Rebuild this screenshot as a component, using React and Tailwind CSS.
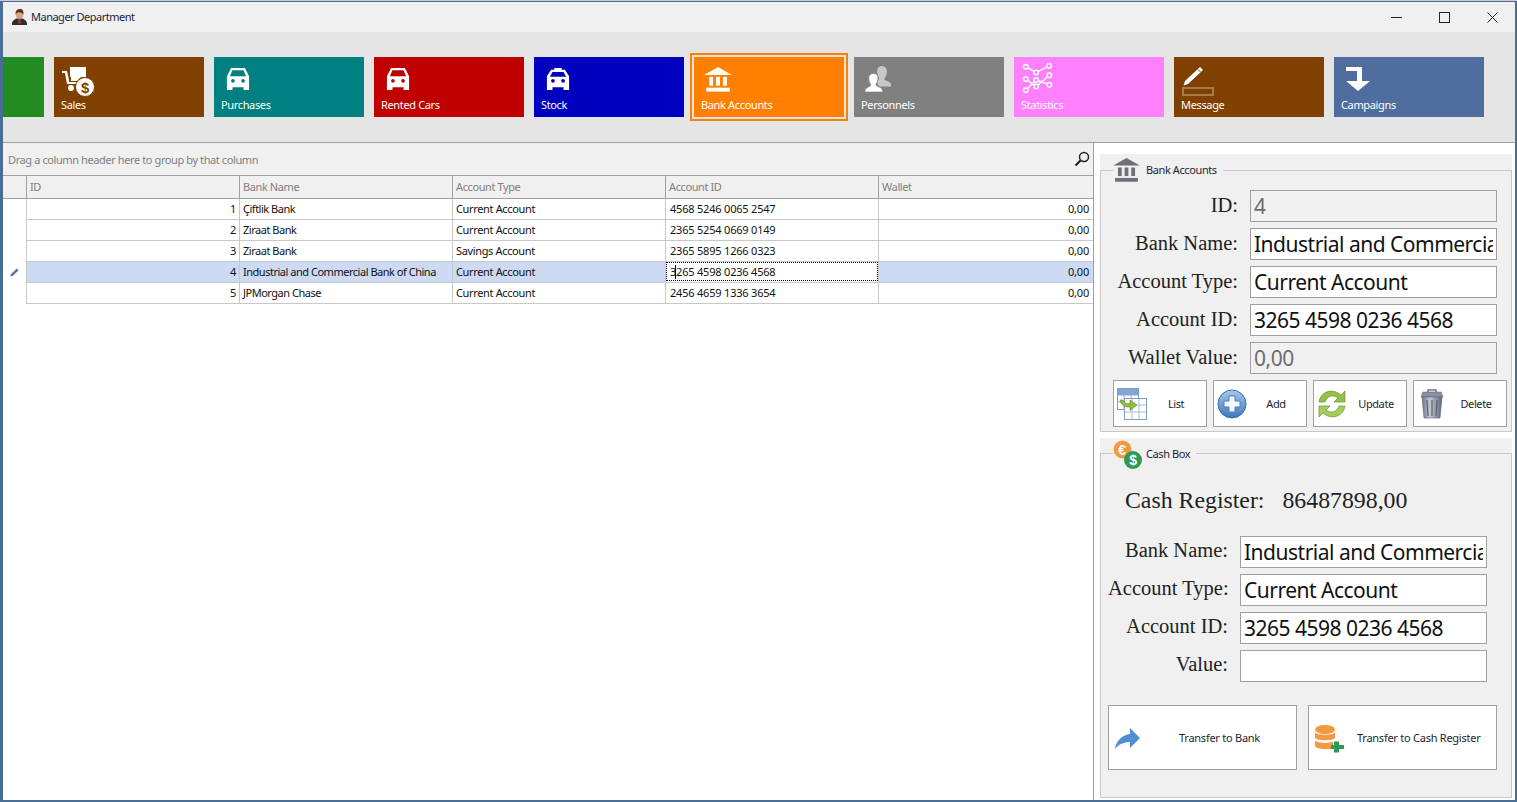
const uiFont = "font-['Noto_Sans','Open_Sans',sans-serif]"

const CarIcon = ({ color }) => (
  <svg width="24" height="24" viewBox="0 0 26 26">
    <path d="M5.500 1H20.500L25 10V25H19V22H7V25H1V10Z" fill="#fff" />
    <path d="M7 3.500H19L21.800 10H4.200Z" fill={color} />
    <circle cx="7.500" cy="15" r="2" fill={color} />
    <circle cx="18.500" cy="15" r="2" fill={color} />
  </svg>
)

const TaxiIcon = () => (
  <svg width="24" height="24" viewBox="0 0 26 26">
    <path d="M9 1H17V3H20.500L25 10V25H19V22H7V25H1V10L5.500 3H9Z" fill="#fff" />
    <path d="M7 5.500H19L21.800 10.500H4.200Z" fill="#0000bf" />
    <circle cx="7.500" cy="15" r="2" fill="#0000bf" />
    <circle cx="18.500" cy="15" r="2" fill="#0000bf" />
  </svg>
)

const BankIcon = ({ color = "#fff", width = 28 }) => (
  <svg width={width} height={width * 0.88} viewBox="0 0 28 25">
    <path d="M14 0L28 8H0Z" fill={color} />
    <rect x="5" y="10" width="4" height="9" fill={color} />
    <rect x="12" y="10" width="4" height="9" fill={color} />
    <rect x="19" y="10" width="4" height="9" fill={color} />
    <rect x="2" y="21" width="24" height="4" fill={color} />
  </svg>
)

const SalesIcon = () => (
  <svg width="33" height="31" viewBox="0 0 33 31">
    <path d="M8 1H24V11H19L15 15H9V11H8Z" fill="#fff" />
    <path d="M0 5H5L7 14V16H15V18H5L3 7H0Z" fill="#fff" />
    <circle cx="9" cy="22" r="3" fill="#fff" />
    <circle cx="23" cy="21" r="9.500" fill="#fff" stroke="#804000" strokeWidth="1" />
    <text x="23" y="26.500" textAnchor="middle" fontSize="15" fontWeight="700" fill="#804000" fontFamily="Liberation Sans, sans-serif">$</text>
  </svg>
)

const PeopleIcon = () => (
  <svg width="28" height="28" viewBox="0 0 30 30">
    <path d="M19 1C23 1 25 4 24.500 8C24.200 11 23 13 22 14V16C24 17 28 18 29 20V23H16L14 18L16 15V13C15 11 14 9 14 7C14 3 16 1 19 1Z" fill="#c8c8c8" />
    <path d="M10 9C14 9 15.500 12 15 15C14.700 17 14 19 13 20.500V22C16 24 19 24 20 27V29H1V27C2 24 5 24 7 22V20.500C6 19 5 17 5 14.500C5 11 7 9 10 9Z" fill="#fff" stroke="#808080" strokeWidth="0.800" />
  </svg>
)

const StatsIcon = () => (
  <svg width="32" height="32" viewBox="0 0 34 34" fill="none" stroke="#fff" strokeWidth="1.600">
    <path d="M4 4L15 10L29 3" />
    <path d="M4 17L15 25L29 13" />
    <path d="M4 29L15 18L29 23" />
    {[[4, 4], [15, 10], [29, 3], [4, 17], [15, 18], [29, 13], [15, 25], [29, 23], [4, 29]].map(([cx, cy]) => (
      <circle key={`${cx}-${cy}`} cx={cx} cy={cy} r="2.400" fill="#ff80ff" strokeWidth="1.600" />
    ))}
  </svg>
)

const MessageIcon = () => (
  <svg width="33" height="29" viewBox="0 0 33 29">
    <path d="M18 0L21 3L6 17L1.500 18.500L3 14Z" fill="#fff" />
    <path d="M16 2.500L18.500 5" stroke="#804000" strokeWidth="1" />
    <rect x="1" y="21" width="30" height="7" fill="none" stroke="#a67a4d" strokeWidth="2" />
  </svg>
)

const CampaignIcon = () => (
  <svg width="24" height="24" viewBox="0 0 24 24">
    <path d="M0 0H16V14H24L12 24L0 14H11V4H0Z" fill="#fff" />
  </svg>
)

const ListIcon = () => (
  <svg width="30" height="32" viewBox="0 0 30 32">
    <rect x="0.500" y="0.500" width="21" height="21" fill="#fff" stroke="#7f9cc4" />
    <rect x="1" y="1" width="20" height="6" fill="#7ea6d6" />
    <path d="M7 1V21M14 1V21M1 7H21M1 14H21" stroke="#8fa8cc" strokeWidth="1" />
    <rect x="7.500" y="10.500" width="22" height="21" fill="#fff" stroke="#7f9cc4" />
    <path d="M15 11V31M22 11V31M8 17H29M8 24H29" stroke="#a9bbd8" strokeWidth="1" />
    <path d="M3 12H6C7 15 10 16 13 15.500V12L20 17L13 22.500V19C8 19.500 4 17 3 12Z" fill="#8fbe3c" stroke="#5e8c1e" strokeWidth="0.600" />
  </svg>
)

const AddIcon = () => (
  <svg width="30" height="30" viewBox="0 0 30 30">
    <defs>
      <linearGradient id="addBlue" x1="0" y1="0" x2="0" y2="1">
        <stop offset="0" stopColor="#a5c8ee" />
        <stop offset="1" stopColor="#3c78c0" />
      </linearGradient>
    </defs>
    <circle cx="15" cy="15" r="14" fill="url(#addBlue)" stroke="#3a6ea8" strokeWidth="1" />
    <path d="M12 7H18V12H23V18H18V23H12V18H7V12H12Z" fill="#f4f8fd" stroke="#4f7fb5" strokeWidth="1" />
  </svg>
)

const UpdateIcon = () => (
  <svg width="30" height="30" viewBox="0 0 30 30">
    <path d="M2 13C3 5 11 0 19 3C21 4 23 5 24 6L28 2V13H17L21 9C16 5 10 7 8 13Z" fill="#94c04a" stroke="#6b962c" strokeWidth="0.700" />
    <path d="M28 17C27 25 19 30 11 27C9 26 7 25 6 24L2 28V17H13L9 21C14 25 20 23 22 17Z" fill="#a4cc5c" stroke="#6b962c" strokeWidth="0.700" />
  </svg>
)

const TrashIcon = () => (
  <svg width="24" height="30" viewBox="0 0 24 30">
    <defs>
      <linearGradient id="trashGrey" x1="0" y1="0" x2="1" y2="0">
        <stop offset="0" stopColor="#6c7488" />
        <stop offset="0.400" stopColor="#c4c8d2" />
        <stop offset="1" stopColor="#5c6478" />
      </linearGradient>
    </defs>
    <path d="M8 3V1H16V3" fill="none" stroke="#6c7488" strokeWidth="1.500" />
    <path d="M1 8L3 3H21L23 8Z" fill="#8a90a0" stroke="#5c6478" strokeWidth="0.600" />
    <path d="M2 8H22L20 29H4Z" fill="url(#trashGrey)" stroke="#5c6478" strokeWidth="0.600" />
    <path d="M7 11L8 27M12 11V27M17 11L16 27" stroke="#5c6478" strokeWidth="1.200" />
  </svg>
)

const CashIcon = () => (
  <svg width="29" height="29" viewBox="0 0 29 29">
    <circle cx="9.500" cy="9.500" r="9" fill="#f19a3e" />
    <text x="9" y="14.500" textAnchor="middle" fontSize="14" fontWeight="700" fill="#fff" fontFamily="Liberation Sans, sans-serif">€</text>
    <circle cx="20" cy="20" r="9" fill="#2f9a57" />
    <text x="20" y="25" textAnchor="middle" fontSize="14" fontWeight="700" fill="#fff" fontFamily="Liberation Sans, sans-serif">$</text>
  </svg>
)

const ShareIcon = () => (
  <svg width="25" height="22" viewBox="0 0 25 22">
    <path d="M15 0L25 10L15 20V14C9 14 4 16 0 21C1 13 7 7 15 6Z" fill="#4f8fd0" />
  </svg>
)

const DbAddIcon = () => (
  <svg width="30" height="28" viewBox="0 0 30 28">
    <ellipse cx="10" cy="4.500" rx="10" ry="4.500" fill="#f19a3e" />
    <path d="M0 7.500C2 10.500 18 10.500 20 7.500V13C18 16 2 16 0 13Z" fill="#f19a3e" />
    <path d="M0 15.500C2 18.500 16 18.500 18 16.500V20H16V24H10C5 24 1 23 0 21Z" fill="#f19a3e" />
    <path d="M19 17H24V20.500H29V24.500H24V28H19V24.500H16V20.500H19Z" fill="#2f9a57" transform="translate(0 -0.500)" />
  </svg>
)

const AvatarIcon = () => (
  <svg width="15" height="16" viewBox="0 0 16 17">
    <path d="M0 16C0 12 3 11 5 10H11C13 11 16 12 16 16V17H0Z" fill="#2b3038" />
    <path d="M7 10H9L9.500 15L8 16L6.500 15Z" fill="#b5332e" />
    <circle cx="8" cy="6" r="4" fill="#d8a583" />
    <path d="M4 6C3 2 6 0 8.500 0C11 0 13 2 12 6C11 4 9 3.500 7 3.500C5.500 3.500 4.500 5 4 6Z" fill="#5a2e1c" />
  </svg>
)

const PencilIcon = () => (
  <svg width="9" height="9" viewBox="0 0 10 10">
    <path d="M7.500 0.500L9.500 2.500L3 9L0.500 9.500L1 7Z" fill="#6272a4" />
  </svg>
)

const tiles = [
  { label: "Sales", bg: "bg-[#804000]", icon: <SalesIcon />, iconBox: "pl-[8px] pt-[9px]" },
  { label: "Purchases", bg: "bg-[#008080]", icon: <CarIcon color="#008080" />, iconBox: "pl-[12px] pt-[10px]" },
  { label: "Rented Cars", bg: "bg-[#c00000]", icon: <CarIcon color="#c00000" />, iconBox: "pl-[12px] pt-[10px]" },
  { label: "Stock", bg: "bg-[#0000bf]", icon: <TaxiIcon />, iconBox: "pl-[12px] pt-[10px]" },
  { label: "Bank Accounts", bg: "bg-[#ff8000]", icon: <BankIcon />, iconBox: "pl-[10px] pt-[10px]", selected: true },
  { label: "Personnels", bg: "bg-[#808080]", icon: <PeopleIcon />, iconBox: "pl-[10px] pt-[8px]" },
  { label: "Statistics", bg: "bg-[#ff80ff]", icon: <StatsIcon />, iconBox: "pl-[8px] pt-[6px]" },
  { label: "Message", bg: "bg-[#804000]", icon: <MessageIcon />, iconBox: "pl-[8px] pt-[10px]" },
  { label: "Campaigns", bg: "bg-[#4f6d9e]", icon: <CampaignIcon />, iconBox: "pl-[12px] pt-[10px]" },
]

const rows = [
  { id: 1, bank: "Çiftlik Bank", type: "Current Account", account: "4568 5246 0065 2547" },
  { id: 2, bank: "Ziraat Bank", type: "Current Account", account: "2365 5254 0669 0149" },
  { id: 3, bank: "Ziraat Bank", type: "Savings Account", account: "2365 5895 1266 0323" },
  { id: 4, bank: "Industrial and Commercial Bank of China", type: "Current Account", account: "3265 4598 0236 4568", active: true },
  { id: 5, bank: "JPMorgan Chase", type: "Current Account", account: "2456 4659 1336 3654" },
]

const gridCols = "grid grid-cols-[23px_213px_213px_213px_213px_215px]"

const Tile = ({ tile }) => (
  <div className={`relative w-[150px] h-[60px] shrink-0 ${tile.bg}`}>
    {tile.selected && (
      <div className="absolute -inset-1 border-2 border-[#ff8000] pointer-events-none">
        <div className="w-full h-full border-2 border-[#e5e5e5]" />
      </div>
    )}
    <div className={`h-[40px] ${tile.iconBox}`}>{tile.icon}</div>
    <div className="pl-[7px] text-[11px] leading-[16px] tracking-[-0.35px] text-white">{tile.label}</div>
  </div>
)

const Field = ({ label, value, disabled, labelW, labelY }) => (
  <div className="flex items-center h-[32px]">
    <label className={`${labelW} ${labelY} pr-[12px] text-right text-[20.5px] leading-[24px] tracking-normal text-[#222] font-['Liberation_Serif',serif] whitespace-nowrap`}>{label}</label>
    <input
      readOnly
      value={value}
      className={`w-[247px] h-[32px] border border-[#a0a0a0] px-[3px] text-[21px] tracking-[-0.5px] outline-none ${uiFont} ${disabled ? "bg-[#f0f0f0] text-[#6d6d6d]" : "bg-white text-[#111]"}`}
    />
  </div>
)

const ActionButton = ({ icon, label }) => (
  <button className="flex items-center w-[94px] h-[47px] bg-white border border-[#a0a0a0] pl-[2px] text-[11px] text-[#1e1e2e]">
    <span className="w-[32px] flex justify-center shrink-0">{icon}</span>
    <span className="flex-1 text-center pr-[2px] pt-[1px]">{label}</span>
  </button>
)

const TransferButton = ({ icon, label, textClass }) => (
  <button className="flex items-center w-[189px] h-[65px] bg-white border border-[#a0a0a0] pl-[6px] text-[11px] tracking-[-0.25px] text-[#1e1e2e]">
    <span className="w-[30px] flex justify-start shrink-0 mt-[2px]">{icon}</span>
    <span className={`flex-1 whitespace-nowrap pt-[2px] ${textClass}`}>{label}</span>
  </button>
)

const GroupBox = ({ title, icon, className, topClass, children }) => (
  <div className={`relative bg-[#f0f0f0] ${className}`}>
    <div className={`h-full ${topClass}`}>
      <div className="h-full border border-[#c8c8c8]">{children}</div>
    </div>
    <div className={`absolute left-[13px] top-0 h-[32px] flex items-center bg-[#f0f0f0] pr-[6px] ${topClass === "pt-[15px]" ? "h-[30px]" : ""}`}>
      <span className="w-[33px] flex justify-start">{icon}</span>
      <span className="text-[11px] leading-[16px] text-[#1e1e2e]">{title}</span>
    </div>
  </div>
)

const App = () => {
  return (
    <div className={`w-[1517px] h-[802px] overflow-hidden bg-[#4a6d96] border-t border-[#c9ccd2] pl-[3px] pr-[2px] pt-[1px] pb-[2px] tracking-[-0.4px] ${uiFont}`}>
      <div className="flex flex-col h-[798px] bg-white">
        {/* Title bar */}
        <div className="flex items-center h-[30px] shrink-0 bg-[#f0f0f0] pl-[9px]">
          <AvatarIcon />
          <span className="ml-[4px] text-[11px] tracking-[-0.5px] text-[#1e1e3c]">Manager Department</span>
          <div className="ml-auto -mr-px flex items-center">
            <span className="w-[48px] flex justify-center">
              <svg width="11" height="11" viewBox="0 0 11 11" stroke="#222" strokeWidth="1"><path d="M0 5.500H11" /></svg>
            </span>
            <span className="w-[48px] flex justify-center">
              <svg width="11" height="11" viewBox="0 0 11 11" fill="none" stroke="#222" strokeWidth="1"><rect x="0.500" y="0.500" width="10" height="10" /></svg>
            </span>
            <span className="w-[48px] flex justify-center">
              <svg width="11" height="11" viewBox="0 0 11 11" stroke="#222" strokeWidth="1"><path d="M0.500 0.500L10.500 10.500M10.500 0.500L0.500 10.500" /></svg>
            </span>
          </div>
        </div>

        {/* Tile strip */}
        <div className="flex gap-[10px] items-start h-[111px] shrink-0 bg-[#e5e5e5] pt-[25px] border-b border-[#a0a0a0]">
          <div className="w-[41px] h-[60px] shrink-0 bg-[#228b22]" />
          {tiles.map((tile) => (
            <Tile key={tile.label} tile={tile} />
          ))}
        </div>

        <div className="flex flex-1 min-h-0">
          {/* Data grid */}
          <div className="w-[1091px] shrink-0 border-r border-[#a0a0a0]">
            <div className="flex items-center justify-between h-[33px] bg-[#f0f0f0] border-b border-[#a0a0a0] pl-[5px] pr-[3px] text-[11px] text-[#7f7f7f]">
              <span className="pt-[2px]">Drag a column header here to group by that column</span>
              <svg width="16" height="16" viewBox="0 0 16 16" fill="none" stroke="#222" strokeWidth="1.500">
                <circle cx="10" cy="6" r="4.500" />
                <path d="M6.500 9.500L1.500 14.500" strokeWidth="2.200" />
              </svg>
            </div>
            <div className={`${gridCols} h-[23px] bg-[#f0f0f0] border-b border-[#a0a0a0] text-[11px] leading-[22px] text-[#7f7f7f]`}>
              <div />
              {["ID", "Bank Name", "Account Type", "Account ID", "Wallet"].map((col, i) => (
                <div key={col} className={`pl-[3px] border-l border-[#a0a0a0] ${i === 4 ? "-mr-px" : ""}`}>{col}</div>
              ))}
            </div>
            {rows.map((row) => {
              const rowBg = row.active ? "bg-[#ccdaf4]" : "bg-white"
              const cell = `h-[21px] border-l border-b border-[#c8c8c8] text-[11px] leading-[20px] text-[#111] ${rowBg}`
              return (
                <div key={row.id} className={gridCols}>
                  <div className="h-[21px] flex items-center justify-center bg-white">
                    {row.active && <PencilIcon />}
                  </div>
                  <div className={`${cell} text-right pr-[3px]`}>{row.id}</div>
                  <div className={`${cell} pl-[3px] tracking-[-0.48px] whitespace-nowrap`}>{row.bank}</div>
                  <div className={`${cell} pl-[3px] tracking-[-0.35px]`}>{row.type}</div>
                  {row.active ? (
                    <div className="relative h-[21px] border-l border-b border-[#c8c8c8] bg-white pl-[4px] text-[11px] leading-[20px] tracking-[-0.2px] text-[#111]">
                      {row.account}
                      <div className="absolute inset-x-0 top-0 bottom-[1px] border border-dotted border-black pointer-events-none" />
                      <div className="absolute left-[9px] top-[3px] w-px h-[14px] bg-black" />
                    </div>
                  ) : (
                    <div className={`${cell} pl-[4px] tracking-[-0.2px]`}>{row.account}</div>
                  )}
                  <div className={`${cell} text-right pr-[4px] tracking-[-0.2px]`}>0,00</div>
                </div>
              )
            })}
          </div>

          {/* Right panels */}
          <div className="flex flex-col flex-1 pl-[6px] pr-[3px]">
            <GroupBox
              title="Bank Accounts"
              icon={<BankIcon color="#6f6f78" width={27} />}
              className="mt-[11px] h-[278px]"
              topClass="pt-[16px]"
            >
              <div className="flex flex-col gap-[6px] pt-[19px] pl-[12px]">
                <div className="flex flex-col gap-[6px]">
                  <Field labelW="w-[137px]" labelY="-mt-[3px]" label="ID:" value="4" disabled />
                  <Field labelW="w-[137px]" labelY="-mt-[3px]" label="Bank Name:" value="Industrial and Commercial Bank of China" />
                  <Field labelW="w-[137px]" labelY="-mt-[3px]" label="Account Type:" value="Current Account" />
                  <Field labelW="w-[137px]" labelY="-mt-[3px]" label="Account ID:" value="3265 4598 0236 4568" />
                  <Field labelW="w-[137px]" labelY="-mt-[3px]" label="Wallet Value:" value="0,00" disabled />
                </div>
                <div className="flex gap-[6px]">
                  <ActionButton icon={<ListIcon />} label="List" />
                  <ActionButton icon={<AddIcon />} label="Add" />
                  <ActionButton icon={<UpdateIcon />} label="Update" />
                  <ActionButton icon={<TrashIcon />} label="Delete" />
                </div>
              </div>
            </GroupBox>

            <GroupBox
              title="Cash Box"
              icon={<CashIcon />}
              className="mt-[6px] h-[360px]"
              topClass="pt-[15px]"
            >
              <div className="pl-[7px]">
                <div className="flex h-[82px] items-center pl-[17px] pt-[11px] text-[23.8px] tracking-normal text-[#222] font-['Liberation_Serif',serif]">
                  <span>Cash Register:</span>
                  <span className="ml-[18px]">86487898,00</span>
                </div>
                <div className="flex flex-col gap-[6px]">
                  <Field labelW="w-[132px]" labelY="-mt-[5px]" label="Bank Name:" value="Industrial and Commercial Bank of China" />
                  <Field labelW="w-[132px]" labelY="-mt-[5px]" label="Account Type:" value="Current Account" />
                  <Field labelW="w-[132px]" labelY="-mt-[5px]" label="Account ID:" value="3265 4598 0236 4568" />
                  <Field labelW="w-[132px]" labelY="-mt-[5px]" label="Value:" value="" />
                </div>
                <div className="flex gap-[11px] mt-[23px]">
                  <TransferButton icon={<ShareIcon />} label="Transfer to Bank" textClass="pl-[34px] text-left" />
                  <TransferButton icon={<DbAddIcon />} label="Transfer to Cash Register" textClass="pl-[12px] text-left" />
                </div>
              </div>
            </GroupBox>
          </div>
        </div>
      </div>
    </div>
  )
}

export default App
